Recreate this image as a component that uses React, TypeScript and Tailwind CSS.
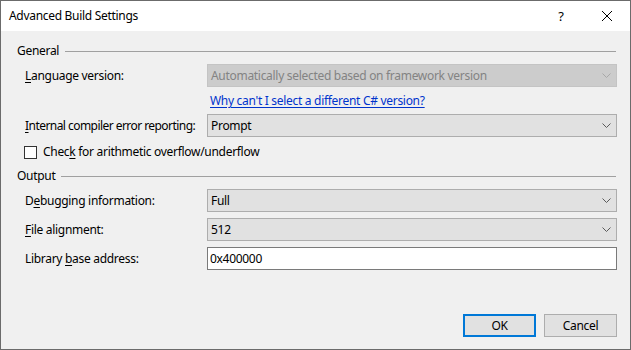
import React from 'react'

const font = { fontFamily: '"Noto Sans", "Open Sans", sans-serif' }

// ── small pieces ───────────────────────────────────────────────────────────────
function Chevron({ disabled }: { disabled?: boolean }) {
  return (
    <svg width="9" height="6" viewBox="0 0 9 6" fill="none" stroke={disabled ? '#a8a8a8' : '#5a5a5a'} strokeWidth="1">
      <polyline points="0.5,0.5 4.5,4.5 8.5,0.5" />
    </svg>
  )
}

function Ak({ children }: { children: React.ReactNode }) {
  return <span className="underline underline-offset-2 decoration-1">{children}</span>
}

function Heading({ title }: { title: string }) {
  return (
    <div className="flex items-center h-4 pl-[16px] pr-[14px]">
      <span className="text-black">{title}</span>
      <div className="flex-1 ml-[6px] h-px bg-[#a0a0a0] mt-px" />
    </div>
  )
}

function Row({ label, children, className = '' }: { label: React.ReactNode; children: React.ReactNode; className?: string }) {
  return (
    <div className={`flex items-center pl-[24px] pr-[13px] ${className}`}>
      <div className="w-[182px] whitespace-nowrap text-black">{label}</div>
      <div className="flex-1">{children}</div>
    </div>
  )
}

function Select({ value, disabled }: { value: string; disabled?: boolean }) {
  return (
    <div
      className={
        disabled
          ? 'h-[23px] flex items-center justify-between pl-[3px] pr-[5px] bg-[#cccccc] border border-[#c4c4c4] text-[#838383]'
          : 'h-[23px] flex items-center justify-between pl-[3px] pr-[5px] bg-[#e1e1e1] border border-[#adadad] text-black'
      }
    >
      <span>{value}</span>
      <Chevron disabled={disabled} />
    </div>
  )
}

// ── App ────────────────────────────────────────────────────────────────────────
export default function App() {
  return (
    <div style={font} className="w-[631px] h-[350px] flex flex-col border border-[#6b6b6b] text-[12px] leading-4 tracking-[-0.3px] bg-[#f0f0f0] select-none">
      {/* title bar */}
      <div className="h-[30px] bg-white flex items-center pl-[8px]">
        <span className="flex-1 text-black">Advanced Build Settings</span>
        <span className="w-[46px] text-center text-[13px] text-black">?</span>
        <div className="w-[46px] h-[30px] flex items-center justify-center">
          <svg width="10" height="10" viewBox="0 0 10 10" stroke="#000" strokeWidth="1">
            <line x1="0" y1="0" x2="10" y2="10" />
            <line x1="10" y1="0" x2="0" y2="10" />
          </svg>
        </div>
      </div>

      {/* body */}
      <div className="flex-1 flex flex-col">
        <div className="mt-[12px]">
          <Heading title="General" />
        </div>

        <Row className="mt-[5px]" label={<><Ak>L</Ak>anguage version:</>}>
          <Select value="Automatically selected based on framework version" disabled />
        </Row>

        <div className="mt-[6px] pl-[209px]">
          <span className="text-[#0033cc] underline underline-offset-2 decoration-1">Why can't I select a different C# version?</span>
        </div>

        <Row className="mt-[5px]" label={<span className="tracking-[-0.55px]"><Ak>I</Ak>nternal compiler error reporting:</span>}>
          <Select value="Prompt" />
        </Row>

        <div className="mt-[7px] pl-[23px] flex items-center h-4">
          <div className="w-[13px] h-[13px] border border-[#333333] bg-white" />
          <span className="ml-[6px] text-black">Chec<Ak>k</Ak> for arithmetic overflow/underflow</span>
        </div>

        <div className="mt-[8px]">
          <Heading title="Output" />
        </div>

        <Row className="mt-[5px]" label={<>D<Ak>e</Ak>bugging information:</>}>
          <Select value="Full" />
        </Row>

        <Row className="mt-[6px]" label={<><Ak>F</Ak>ile alignment:</>}>
          <Select value="512" />
        </Row>

        <Row className="mt-[6px]" label={<>Library <Ak>b</Ak>ase address:</>}>
          <div className="h-[23px] flex items-center pl-[2px] bg-white border border-[#7a7a7a] text-black">0x400000</div>
        </Row>

        <div className="flex-1" />

        {/* buttons */}
        <div className="flex justify-end gap-[8px] pr-[13px] pb-[12px]">
          <button className="w-[73px] h-[23px] bg-[#e1e1e1] border-2 border-[#0078d7] text-black">OK</button>
          <button className="w-[73px] h-[23px] bg-[#e1e1e1] border border-[#adadad] text-black">Cancel</button>
        </div>
      </div>
    </div>
  )
}
